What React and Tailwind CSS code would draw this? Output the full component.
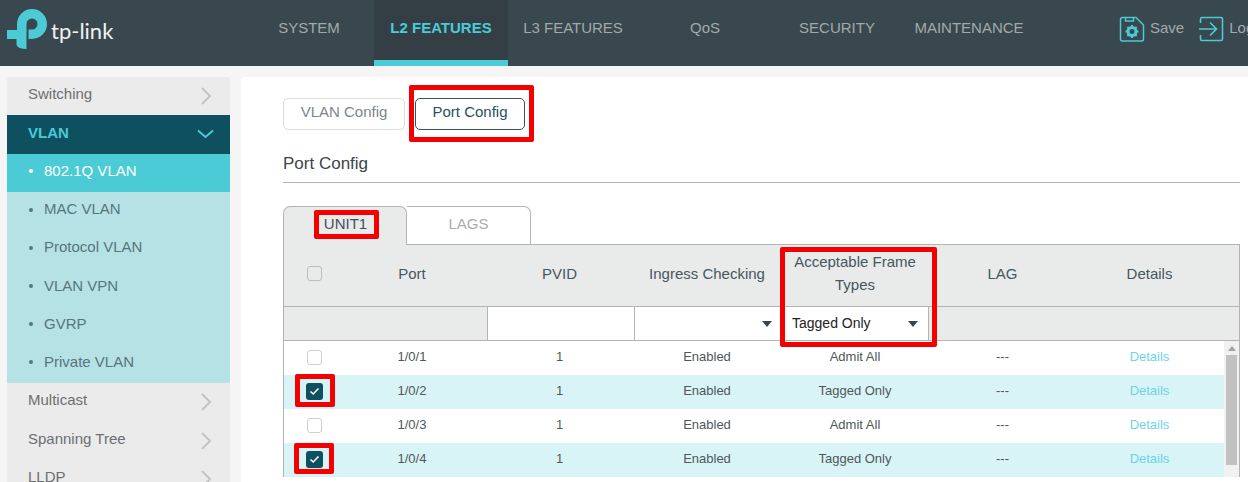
import React from "react";

function Logo() {
  return (
    <svg width="42" height="42" viewBox="0 0 42 42" className="shrink-0">
      <path d="M14.75 22 V15 A10.25 10.25 0 1 1 25 25.25 H21.5" fill="none" stroke="#4acbd6" strokeWidth="9.5" />
      <path d="M0 21 H19.5 V40 Q11 40 9.5 36 V30 H0 Z" fill="#4acbd6" />
    </svg>
  );
}

function Chevron({ open }) {
  if (open) {
    return (
      <svg width="20" height="12" viewBox="0 0 20 12" className="mb-[2px] mr-[14px]">
        <path d="M2 2.5 L9.5 9 L17 2.5" fill="none" stroke="#4acbd6" strokeWidth="1.8" />
      </svg>
    );
  }
  return (
    <svg width="12" height="20" viewBox="0 0 12 20" className="mr-[18px]">
      <path d="M2 2 L10 10 L2 18" fill="none" stroke="#c4c4c4" strokeWidth="2" />
    </svg>
  );
}

function Check({ checked, header }) {
  if (checked) {
    return (
      <span className="flex h-[17px] w-[17px] items-center justify-center rounded-[3px] bg-[#0f5060]">
        <svg width="11" height="9" viewBox="0 0 11 9">
          <path d="M1.5 4.5 L4.2 7 L9.5 1.5" fill="none" stroke="#fff" strokeWidth="1.6" />
        </svg>
      </span>
    );
  }
  return (
    <span className={`block h-[15px] w-[15px] rounded-[3px] border ${header ? "border-[#bdbfbf] bg-[#e9ebeb]" : "border-[#cfcfcf] bg-white"}`} />
  );
}

function Caret() {
  return <span className="h-0 w-0 border-x-[5px] border-t-[6px] border-x-transparent border-t-[#3a474e]" />;
}

function SideItem({ label }) {
  return (
    <div className="flex h-[38.33px] items-center justify-between pl-[21px] text-[15px] text-[#6b6f72]">
      <span className="-mt-[4px]">{label}</span>
      <Chevron />
    </div>
  );
}

function SubItem({ label, active }) {
  return (
    <div className={`flex h-[38.17px] items-center pb-[4px] pl-[22px] text-[15px] ${active ? "bg-[#4acbd6] text-white" : "text-[#56767c]"}`}>
      <span className={`mr-[11px] h-[4px] w-[4px] rounded-full ${active ? "bg-white" : "bg-[#56767c]"}`} />
      <span>{label}</span>
    </div>
  );
}

const rows = [
  ["1/0/1", "Admit All", false],
  ["1/0/2", "Tagged Only", true],
  ["1/0/3", "Admit All", false],
  ["1/0/4", "Tagged Only", true],
];

const Red = ({ className }) => (
  <div className={`pointer-events-none absolute rounded-[2px] border-[5px] border-[#f40000] ${className}`} />
);

export default function App() {
  return (
    <div className="relative h-[482px] w-[1248px] overflow-hidden bg-[#f5f5f5] font-['Liberation_Sans',Arial,sans-serif]">
      <header className="flex h-[66px] items-stretch overflow-hidden bg-[#39474e]">
        <div className="flex w-[243px] shrink-0 items-start pl-[7px] pt-[9px]">
          <Logo />
          <span className="ml-[2px] mt-[9px] font-['Lato',sans-serif] text-[22px] leading-[26px] text-[#eef2f2]">tp-link</span>
        </div>
        <nav className="flex shrink-0 text-[15px] text-[#a3a9ab]">
          {["SYSTEM", "L2 FEATURES", "L3 FEATURES", "QoS", "SECURITY", "MAINTENANCE"].map((n, i) =>
            i === 1 ? (
              <div key={n} className="-mx-px flex w-[134px] items-center justify-center border-b-[6px] border-[#4acbd6] bg-[#333f45] font-bold text-[#4acbd6]">
                <span className="-mt-[3px]">{n}</span>
              </div>
            ) : (
              <div key={n} className="flex w-[132px] items-center justify-center pb-[10px] pt-[1px]">{n}</div>
            )
          )}
        </nav>
        <div className="ml-[84px] flex shrink-0 items-center pb-[9px] text-[15px] text-[#a3a9ab]">
          <svg width="26" height="26" viewBox="0 0 26 26" className="shrink-0">
            <path d="M1.5 3.5 Q1.5 1.5 3.5 1.5 H17 L24.5 9 V23 Q24.5 25 22.5 25 H3.5 Q1.5 25 1.5 23 Z" fill="none" stroke="#4acbd6" strokeWidth="1.5" />
            <path d="M6.5 2 V5 H14.5 V2" fill="none" stroke="#4acbd6" strokeWidth="1.5" />
            <circle cx="13" cy="15.5" r="4" fill="none" stroke="#4acbd6" strokeWidth="3" />
            <path d="M13 9 V22 M6.5 15.5 H19.5 M8.4 10.9 L17.6 20.1 M17.6 10.9 L8.4 20.1" stroke="#4acbd6" strokeWidth="2" strokeDasharray="2.4 8.2" />
          </svg>
          <span className="ml-[5px]">Save</span>
          <svg width="25" height="26" viewBox="0 0 25 26" className="ml-[15px] shrink-0">
            <path d="M1.5 7 V3 Q1.5 1.5 3 1.5 H22 Q23.5 1.5 23.5 3 V23 Q23.5 24.5 22 24.5 H3 Q1.5 24.5 1.5 23 V19" fill="none" stroke="#4acbd6" strokeWidth="1.6" />
            <path d="M0 13 H17 M11 6.5 L17.5 13 L11 19.5" fill="none" stroke="#4acbd6" strokeWidth="1.7" />
          </svg>
          <span className="ml-[5px] whitespace-nowrap">Logout</span>
        </div>
      </header>

      <div className="flex items-start pt-[11px]">
        <aside className="ml-[7px] w-[223px] shrink-0 overflow-hidden rounded-t-[3px] bg-[#ebebeb]">
          <SideItem label="Switching" />
          <div className="flex h-[39px] items-center justify-between bg-[#0f5060] pl-[21px] text-[15px] font-bold text-[#4acbd6]">
            <span className="-mt-[3px]">VLAN</span>
            <Chevron open />
          </div>
          <div className="bg-[#b6e1e5]">
            <SubItem label="802.1Q VLAN" active />
            <SubItem label="MAC VLAN" />
            <SubItem label="Protocol VLAN" />
            <SubItem label="VLAN VPN" />
            <SubItem label="GVRP" />
            <SubItem label="Private VLAN" />
          </div>
          <SideItem label="Multicast" />
          <SideItem label="Spanning Tree" />
          <SideItem label="LLDP" />
        </aside>

        <main className="ml-[11px] h-[405px] flex-1 rounded-tl-[4px] bg-white pl-[42px] pr-[8px] pt-[21px]">
          <div className="flex gap-[10px] text-[15px]">
            <div className="flex h-[32px] w-[122px] items-center justify-center rounded-[5px] border border-[#dcdcdc] pb-[3px] text-[#7e868a]">VLAN Config</div>
            <div className="flex h-[32px] w-[110px] items-center justify-center rounded-[5px] border border-[#39525c] pb-[3px] text-[#27505e]">Port Config</div>
          </div>
          <div className="mt-[22px] border-b border-[#b4b4b4] pb-[6px] text-[17px] leading-[24px] text-[#3c4549]">Port Config</div>

          <div className="mt-[23px] flex h-[39px] text-[15px]">
            <div className="flex w-[124px] items-center justify-center rounded-t-[7px] border border-b-0 border-[#b4b4b4] bg-[#e9ebeb] pb-[3px] pl-[1px] text-[#3e5159]">UNIT1</div>
            <div className="flex w-[124px] items-center justify-center rounded-tr-[7px] border-y border-r border-[#b4b4b4] pb-[3px] text-[#a9adaf]">LAGS</div>
            <div className="flex-1 border-b border-[#b4b4b4]" />
          </div>

          <div className="border-x border-[#b4b4b4]">
            <div className="grid h-[62px] grid-cols-[54px_148px_147px_148px_148px_147px_147px_1fr] items-center border-b border-[#b4b4b4] bg-[#e9ebeb] pb-[4px] text-center text-[15px] leading-[23px] text-[#46575e]">
              <div className="flex justify-center pl-[7px]"><Check header /></div>
              <div>Port</div>
              <div>PVID</div>
              <div>Ingress Checking</div>
              <div className="pb-[1px]">Acceptable Frame<br />Types</div>
              <div>LAG</div>
              <div>Details</div>
              <div />
            </div>
            <div className="grid h-[34px] grid-cols-[203px_147px_147px_148px_1fr] border-b border-[#b4b4b4] bg-[#e9ebeb] text-[14px] text-[#222]">
              <div />
              <div className="border-l border-[#b4b4b4] bg-white" />
              <div className="flex items-center justify-end border-l border-[#b4b4b4] bg-white pr-[9px]"><Caret /></div>
              <div className="flex items-center justify-between border-x border-[#b4b4b4] bg-white pl-[10px] pr-[10px]">
                <span>Tagged Only</span><Caret />
              </div>
              <div />
            </div>
            <div className="flex">
              <div className="flex-1">
                {rows.map(([port, type, sel]) => (
                  <div key={port} className={`grid h-[34px] grid-cols-[54px_148px_147px_148px_148px_147px_147px] items-center pb-[2px] text-center text-[13px] text-[#50575a] ${sel ? "bg-[#d8f4f6]" : "bg-white"}`}>
                    <div className="flex justify-center pl-[7px]"><Check checked={sel} /></div>
                    <div>{port}</div>
                    <div>1</div>
                    <div>Enabled</div>
                    <div>{type}</div>
                    <div>---</div>
                    <div className="text-[#6fd3e2]">Details</div>
                  </div>
                ))}
              </div>
              <div className="flex h-[136px] w-[15px] flex-col items-center bg-[#f1f1f1] pt-[5px]">
                <span className="h-0 w-0 border-x-[4px] border-b-[5px] border-x-transparent border-b-[#a3a3a3]" />
                <span className="mt-[4px] h-[110px] w-[11px] bg-[#c1c1c1]" />
              </div>
            </div>
          </div>
        </main>
      </div>

      <Red className="left-[409px] top-[85px] h-[57px] w-[125px]" />
      <Red className="left-[314px] top-[210px] h-[29px] w-[65px]" />
      <Red className="left-[780px] top-[247px] h-[100px] w-[157px]" />
      <Red className="left-[295px] top-[374px] h-[33px] w-[40px]" />
      <Red className="left-[294px] top-[443px] h-[31px] w-[40px]" />
    </div>
  );
}
